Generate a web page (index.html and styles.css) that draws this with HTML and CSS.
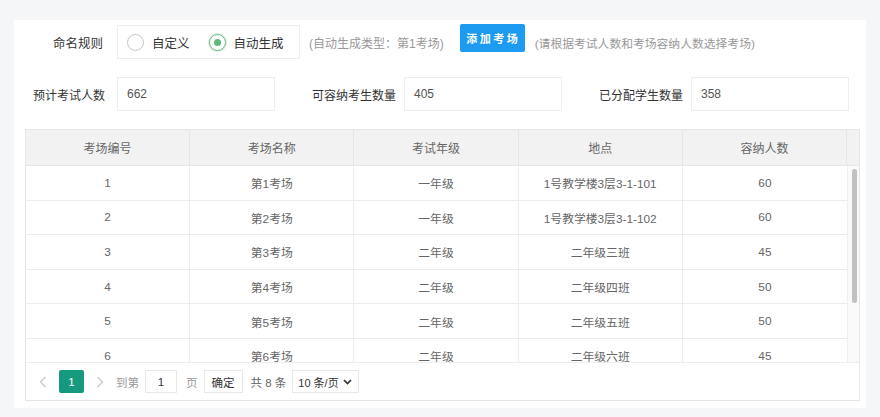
FILE: index.html
```html
<!DOCTYPE html>
<html lang="zh-CN">
<head>
<meta charset="utf-8">
<title>考场设置</title>
<link rel="stylesheet" href="styles.css">
</head>
<body>
<div class="card">
  <div class="form-row first">
    <label class="lbl">命名规则</label>
    <div class="radio-box">
      <span class="radio"><i class="ring"></i>自定义</span>
      <span class="radio on"><i class="ring"></i>自动生成</span>
    </div>
    <span class="hint h1">(自动生成类型：第1考场)</span>
    <button class="btn-add">添加考场</button>
    <span class="hint h2">(请根据考试人数和考场容纳人数选择考场)</span>
  </div>
  <div class="form-row second">
    <div class="field"><label class="lbl">预计考试人数</label><div class="input">662</div></div>
    <div class="field"><label class="lbl">可容纳考生数量</label><div class="input">405</div></div>
    <div class="field"><label class="lbl">已分配学生数量</label><div class="input">358</div></div>
  </div>
  <div class="table">
    <div class="thead">
      <div class="th">考场编号</div>
      <div class="th">考场名称</div>
      <div class="th">考试年级</div>
      <div class="th">地点</div>
      <div class="th">容纳人数</div>
      <div class="th gutter"></div>
    </div>
    <div class="tbody">
      <div class="rows">
        <div class="tr"><div class="td">1</div><div class="td">第1考场</div><div class="td">一年级</div><div class="td">1号教学楼3层3-1-101</div><div class="td">60</div></div>
        <div class="tr"><div class="td">2</div><div class="td">第2考场</div><div class="td">一年级</div><div class="td">1号教学楼3层3-1-102</div><div class="td">60</div></div>
        <div class="tr"><div class="td">3</div><div class="td">第3考场</div><div class="td">二年级</div><div class="td">二年级三班</div><div class="td">45</div></div>
        <div class="tr"><div class="td">4</div><div class="td">第4考场</div><div class="td">二年级</div><div class="td">二年级四班</div><div class="td">50</div></div>
        <div class="tr"><div class="td">5</div><div class="td">第5考场</div><div class="td">二年级</div><div class="td">二年级五班</div><div class="td">50</div></div>
        <div class="tr"><div class="td">6</div><div class="td">第6考场</div><div class="td">二年级</div><div class="td">二年级六班</div><div class="td">45</div></div>
      </div>
      <div class="scrollbar"><div class="thumb"></div></div>
    </div>
    <div class="pager">
      <span class="arrow prev"><svg width="8" height="12" viewBox="0 0 8 12"><path d="M6.5 1 L1.5 6 L6.5 11" fill="none" stroke="#c8c8c8" stroke-width="1.2"/></svg></span>
      <span class="page cur">1</span>
      <span class="arrow next"><svg width="8" height="12" viewBox="0 0 8 12"><path d="M1.5 1 L6.5 6 L1.5 11" fill="none" stroke="#c8c8c8" stroke-width="1.2"/></svg></span>
      <span class="ptxt skip">到第</span>
      <span class="pinput">1</span>
      <span class="ptxt ye">页</span>
      <span class="pbtn">确定</span>
      <span class="ptxt total">共 8 条</span>
      <span class="psel"><span>10 条/页</span><svg width="9" height="6" viewBox="0 0 9 6"><path d="M1 1 L4.5 4.5 L8 1" fill="none" stroke="#333" stroke-width="1.7"/></svg></span>
    </div>
  </div>
</div>
</body>
</html>
```
FILE: styles.css
```css
* { box-sizing: border-box; }
html, body { margin: 0; padding: 0; }
body {
  background: #f5f6f8;
  font-family: "Liberation Sans", "Noto Sans CJK SC", sans-serif;
  color: #333;
  width: 880px;
  height: 417px;
  overflow: hidden;
}
.card {
  margin: 20px 14px 0 14px;
  height: 388px;
  background: #fff;
  padding: 5px 6px 8px 11px;
}
.form-row { display: flex; align-items: center; }
.form-row.first { height: 34px; }
.lbl {
  width: 80px;
  text-align: right;
  font-size: 12px;
  color: #333;
  white-space: nowrap;
  flex: none;
}
.first .lbl { padding-right: 2px; font-size: 12.5px; }
.radio-box {
  margin-left: 12px;
  width: 183px;
  height: 34px;
  border: 1px solid #eeeeee;
  display: flex;
  align-items: center;
  padding-left: 9px;
  font-size: 12.5px;
  color: #333;
  flex: none;
}
.radio { display: flex; align-items: center; }
.radio + .radio { margin-left: 19px; }
.ring {
  width: 17px; height: 17px;
  border: 1px solid #c6c6c6;
  border-radius: 50%;
  margin-right: 8px;
  position: relative;
  display: inline-block;
}
.radio.on .ring { border-color: #5fb878; box-shadow: 0 0 0 1px rgba(95,184,120,0.25); }
.radio.on .ring::after {
  content: "";
  position: absolute;
  left: 4px; top: 4px;
  width: 7px; height: 7px;
  border-radius: 50%;
  background: #5fb878;
}
.hint { font-size: 12px; color: #999; white-space: nowrap; }
.hint.h1 { margin-left: 9px; }
.btn-add {
  align-self: flex-start;
  margin-top: -1px;
  margin-left: 16px;
  height: 28px;
  width: 65px;
  border: none;
  border-radius: 2px;
  background: #1d9bf0;
  color: #fff;
  font-family: inherit;
  font-size: 11px;
  font-weight: bold;
  letter-spacing: 2.5px;
  padding: 0 0 0 2px;
  flex: none;
}
.hint.h2 { margin-left: 10px; font-size: 11.8px; }
.form-row.second {
  margin-top: 18px;
  display: grid;
  grid-template-columns: repeat(3, 287px);
}
.field { display: flex; align-items: center; }
.input {
  margin-left: 12px;
  width: 158px;
  height: 34px;
  border: 1px solid #eeeeee;
  font-size: 12px;
  line-height: 32px;
  padding-left: 9px;
  color: #555;
}
.table {
  margin-top: 18px;
  border: 1px solid #e6e6e6;
  height: 272px;
  display: flex;
  flex-direction: column;
}
.thead {
  display: grid;
  grid-template-columns: repeat(5, 1fr) 12px;
  background: #f2f2f2;
  height: 36px;
  border-bottom: 1px solid #e6e6e6;
  flex: none;
}
.th {
  font-size: 12px;
  color: #666;
  display: flex;
  align-items: center;
  justify-content: center;
  border-right: 1px solid #e6e6e6;
}
.th.gutter { border-right: none; }
.tbody {
  height: 197px;
  flex: none;
  display: flex;
  border-bottom: 1px solid #eeeeee;
}
.rows { flex: 1; overflow: hidden; }
.scrollbar {
  width: 12px;
  flex: none;
  background: #fafafa;
  border-left: 1px solid #f0f0f0;
  padding: 3px 0 0 4px;
}
.thumb {
  width: 5px;
  height: 134px;
  background: #c1c1c1;
  border-radius: 3px;
}
.tr {
  display: grid;
  grid-template-columns: repeat(5, 1fr);
  height: 34.6px;
  border-bottom: 1px solid #ececec;
}
.td {
  font-size: 11.8px;
  color: #666;
  display: flex;
  align-items: center;
  justify-content: center;
  border-right: 1px solid #ececec;
}
.td:last-child { border-right: none; }
.pager {
  flex: 1;
  display: flex;
  align-items: center;
  padding-left: 5px;
  font-size: 11.5px;
  white-space: nowrap;
}
.pager > * { flex: none; }
.arrow {
  width: 24px; height: 23px;
  display: flex; align-items: center; justify-content: center;
}
.page.cur {
  margin: 0 4px;
  width: 25px; height: 23px;
  background: #15997f;
  color: #fff;
  border-radius: 2px;
  display: flex; align-items: center; justify-content: center;
  font-size: 11.5px;
}
.ptxt { color: #999; }
.skip { margin-left: 4px; }
.pinput {
  margin-left: 6px;
  width: 32px; height: 23px;
  border: 1px solid #e8e8e8;
  display: flex; align-items: center; justify-content: center;
  color: #333;
}
.ye { margin-left: 9px; }
.pbtn {
  margin-left: 6px;
  width: 39px; height: 23px;
  border: 1px solid #e8e8e8;
  display: flex; align-items: center; justify-content: center;
  color: #333;
}
.total { margin-left: 8px; color: #666; }
.psel {
  margin-left: 6px;
  width: 67px; height: 23px;
  border: 1px solid #e8e8e8;
  display: flex; align-items: center; justify-content: space-between;
  padding: 0 6px 0 5px;
  color: #333;
  font-size: 11px;
}
```
